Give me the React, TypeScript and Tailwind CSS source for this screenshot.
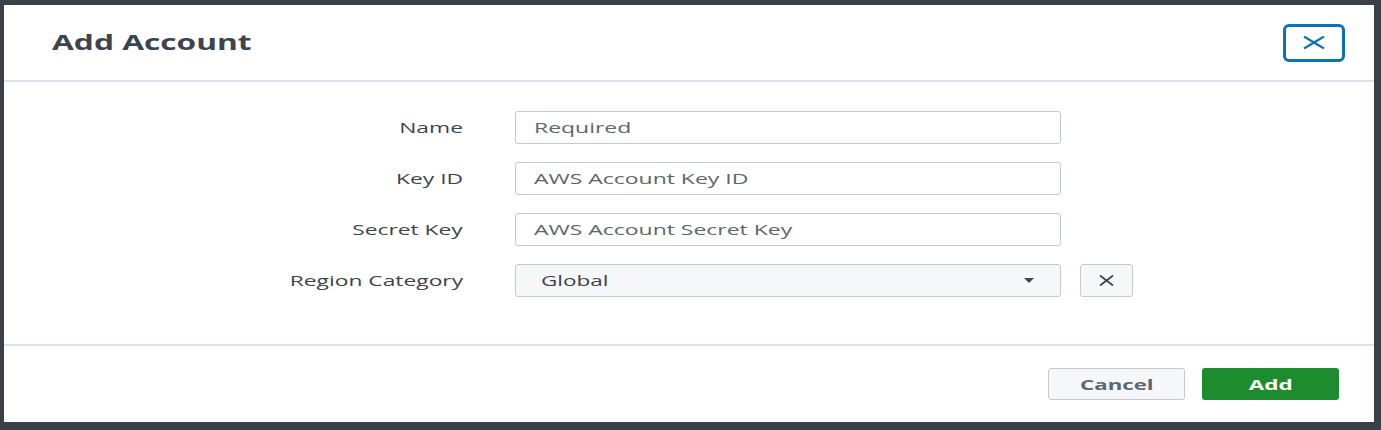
import React from "react";

const font = { fontFamily: '"Open Sans", "Liberation Sans", sans-serif' };

function Row({ label, children }: { label: string; children: React.ReactNode }) {
  return (
    <div className="flex items-center h-[33px]">
      <div className="w-[459px] text-right text-[15px] text-[#3c444d] leading-none">
        <span className="inline-block origin-right scale-x-[1.52]">{label}</span>
      </div>
      <div className="ml-[52px] flex items-center">{children}</div>
    </div>
  );
}

function TextBox({ text }: { text: string }) {
  return (
    <div className="w-[546px] h-[33px] border border-[#c3cad2] rounded-[3px] bg-white flex items-center pl-[18px] text-[15px] text-[#5c6670]">
      <span className="inline-block origin-left scale-x-[1.53]">{text}</span>
    </div>
  );
}

export default function App() {
  return (
    <div className="w-[1381px] h-[430px] bg-[#3a4047] pt-[5px] pl-[4px]" style={font}>
      <div className="w-[1370px] h-[417px] bg-white flex flex-col">
        <div className="h-[77px] flex items-center justify-between pl-[48px] pr-[29px] border-b-2 border-[#dde2e7] shrink-0">
          <div className="text-[22px] font-bold text-[#3c444d] leading-none -mt-[3px]">
            <span className="inline-block origin-left scale-x-[1.44]">Add Account</span>
          </div>
          <button className="w-[62px] h-[38px] border-[3px] border-[#0b72b5] rounded-[6px] flex items-center justify-center bg-white">
            <svg width="22" height="13" viewBox="0 0 22 13">
              <path d="M1 0.5 L21 12.5 M21 0.5 L1 12.5" stroke="#0b72b5" strokeWidth="2.2" fill="none" />
            </svg>
          </button>
        </div>
        <div className="flex flex-col gap-[18px] pt-[29px] pb-[47px] border-b-2 border-[#dde2e7] shrink-0">
          <Row label="Name"><TextBox text="Required" /></Row>
          <Row label="Key ID"><TextBox text="AWS Account Key ID" /></Row>
          <Row label="Secret Key"><TextBox text="AWS Account Secret Key" /></Row>
          <Row label="Region Category">
            <div className="w-[546px] h-[33px] border border-[#c3cad2] rounded-[3px] bg-[#f5f7f9] flex items-center justify-between pl-[25px] pr-[26px] text-[15px] text-[#3c444d]">
              <span className="inline-block origin-left scale-x-[1.5]">Global</span>
              <svg width="10" height="5" viewBox="0 0 10 5">
                <path d="M0 0 L10 0 L5 5 Z" fill="#3c444d" />
              </svg>
            </div>
            <button className="ml-[19px] w-[53px] h-[33px] border border-[#c3cad2] rounded-[3px] bg-[#f5f7f9] flex items-center justify-center">
              <svg width="15" height="11" viewBox="0 0 15 11">
                <path d="M1 0.5 L14 10.5 M14 0.5 L1 10.5" stroke="#3c444d" strokeWidth="1.8" fill="none" />
              </svg>
            </button>
          </Row>
        </div>
        <div className="flex-1 flex items-center justify-end pr-[35px] gap-[17px]">
          <button className="w-[137px] h-[32px] border border-[#c3cad2] rounded-[3px] bg-[#f5f7f9] text-[15px] font-bold text-[#5c6670] flex items-center justify-center">
            <span className="inline-block scale-x-[1.48]">Cancel</span>
          </button>
          <button className="w-[137px] h-[32px] rounded-[3px] bg-[#1c8c2f] text-[15px] font-bold text-white flex items-center justify-center">
            <span className="inline-block scale-x-[1.5]">Add</span>
          </button>
        </div>
      </div>
    </div>
  );
}
